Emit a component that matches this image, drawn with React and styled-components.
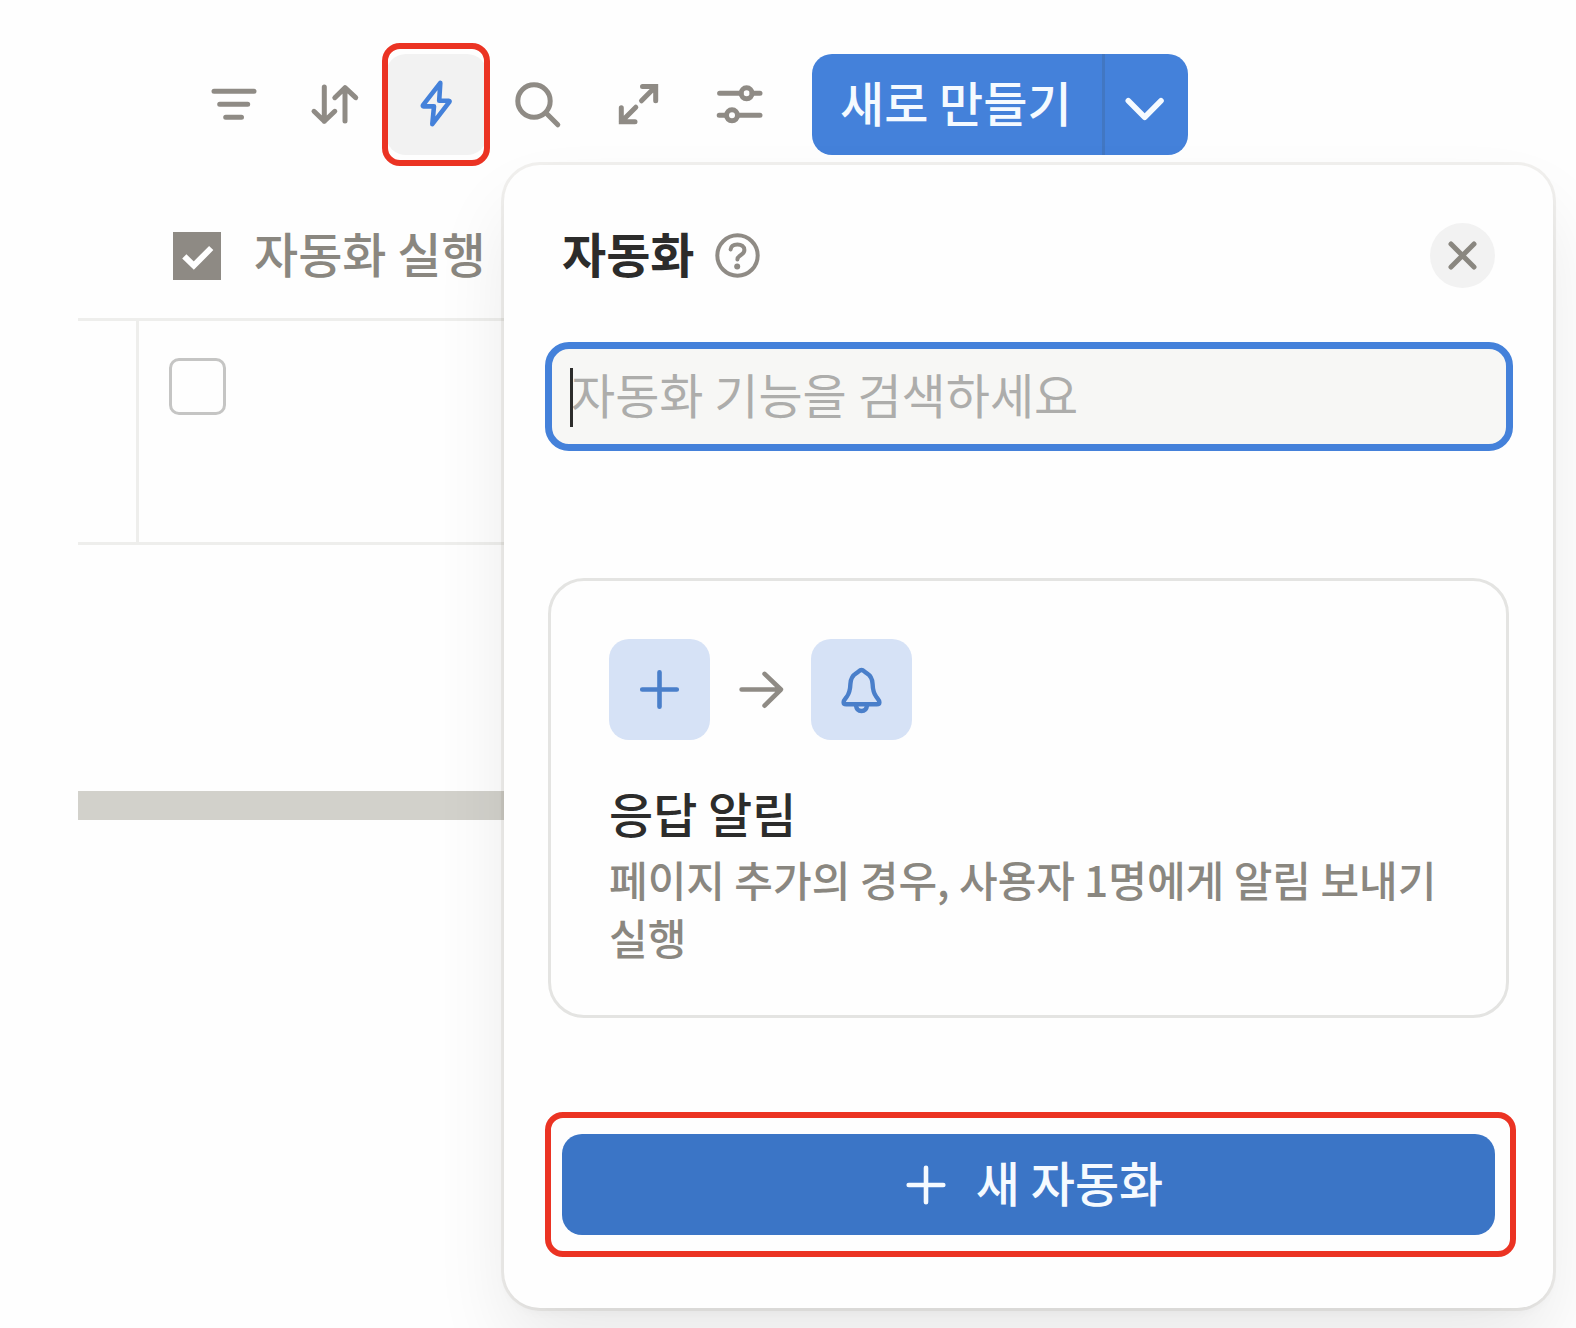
import React, { useState } from "react";
import styled, { createGlobalStyle, css } from "styled-components";

const colors = {
    page: "#fefefe",
    text: "#2c2c2b",
    muted: "#8a8780",
    icon: "#8f8b85",
    line: "#eeeeec",
    cardLine: "#e4e4e2",
    hover: "#f2f2f2",
    blue: "#4481da",
    blueDark: "#3b75c6",
    tile: "#d6e2f6",
    tileIcon: "#4a7fca",
    mark: "#eb3323",
};

const App = () => {
    return (
        <>
            <GlobalStyle/>
            <Page>
                <Toolbar/>
                <Database/>
                <AutomationMenu/>
            </Page>
        </>
    )
}

export default App;

const Toolbar = () => (
    <StyledToolbar>
        <IconButton type="button" aria-label="필터"><FilterIcon/></IconButton>
        <IconButton type="button" aria-label="정렬"><SortIcon/></IconButton>
        <Marked $inset="-11px -3px -11px -4px">
            <IconButton type="button" aria-label="자동화" $active><BoltIcon/></IconButton>
        </Marked>
        <IconButton type="button" aria-label="검색"><SearchIcon/></IconButton>
        <IconButton type="button" aria-label="전체 화면"><ExpandIcon/></IconButton>
        <IconButton type="button" aria-label="설정"><SlidersIcon/></IconButton>
        <SplitButton>
            <CreateButton type="button">새로 만들기</CreateButton>
            <MoreButton type="button" aria-label="템플릿"><ChevronIcon/></MoreButton>
        </SplitButton>
    </StyledToolbar>
)

const Database = () => {
    const [checked, setChecked] = useState(false);

    return (
        <StyledDatabase>
            <Table>
                <thead>
                    <tr>
                        <NarrowHead/>
                        <HeadCell scope="col">
                            <ColumnName>
                                <CheckIcon/>
                                <ColumnLabel>자동화 실행</ColumnLabel>
                            </ColumnName>
                        </HeadCell>
                    </tr>
                </thead>
                <tbody>
                    <tr>
                        <BodyCell/>
                        <BodyCell $divided>
                            <Checkbox
                                type="checkbox"
                                aria-label="자동화 실행"
                                checked={checked}
                                onChange={(e) => setChecked(e.target.checked)}
                            />
                        </BodyCell>
                    </tr>
                </tbody>
            </Table>
            <ScrollThumb/>
        </StyledDatabase>
    )
}

const AutomationMenu = () => {
    const [query, setQuery] = useState("");

    return (
        <Menu role="dialog" aria-labelledby="menu-title">
            <MenuHeader>
                <MenuTitle id="menu-title">자동화</MenuTitle>
                <HelpLink href="#help" aria-label="도움말"><HelpIcon/></HelpLink>
                <CloseButton type="button" aria-label="닫기"><CloseIcon/></CloseButton>
            </MenuHeader>
            <SearchBox>
                <SearchInput
                    type="text"
                    aria-label="자동화 검색"
                    placeholder="자동화 기능을 검색하세요"
                    value={query}
                    onChange={(e) => setQuery(e.target.value)}
                />
                {!query && <Caret/>}
            </SearchBox>
            <Card>
                <Flow>
                    <Tile><PlusIcon size={101}/></Tile>
                    <ArrowIcon/>
                    <Tile><BellIcon/></Tile>
                </Flow>
                <CardTitle>응답 알림</CardTitle>
                <CardText>페이지 추가의 경우, 사용자 1명에게 알림 보내기 실행</CardText>
            </Card>
            <MenuFooter>
                <Marked $inset="-22px -21px -22px -17px">
                    <PrimaryButton type="button">
                        <PlusIcon size={64}/>
                        <ButtonLabel>새 자동화</ButtonLabel>
                    </PrimaryButton>
                </Marked>
            </MenuFooter>
        </Menu>
    )
}

/* icons */

const FilterIcon = () => (
    <Icon width="101" height="101" viewBox="0 0 101 101">
        <path d="M30 37.3H70M35.7 50.3H63.7M41.7 63.3H57.5"/>
    </Icon>
)

const SortIcon = () => (
    <Icon width="101" height="101" viewBox="0 0 101 101">
        <path d="M39.3 33V67.3M29 57.3L39.3 67.3L49.8 57.3"/>
        <path d="M60 67V33.7M49.8 43.7L60 33.7L70.7 43.7"/>
    </Icon>
)

const BoltIcon = () => (
    <Icon width="101" height="101" viewBox="0 0 101 101" $weight={4.6}>
        <path d="M54.3 28.8L37 51.2C36.6 51.9 36.8 52.4 37.6 52.4H48L46.3 70.2L63.4 47.8C63.8 47.1 63.6 46.7 62.8 46.7H53.2Z"/>
    </Icon>
)

const SearchIcon = () => (
    <Icon width="101" height="101" viewBox="0 0 101 101">
        <circle cx="47" cy="47" r="16.2"/>
        <path d="M59.3 59.3L70.8 70.8"/>
    </Icon>
)

const ExpandIcon = () => (
    <Icon width="101" height="101" viewBox="0 0 101 101" $join="miter">
        <path d="M54.5 32.6H67.7V46.8M67.7 32.6L53.5 46.8"/>
        <path d="M33.3 53.8V67.7H47M33.3 67.7L47.8 53.2"/>
    </Icon>
)

const SlidersIcon = () => (
    <Icon width="101" height="101" viewBox="0 0 101 101">
        <circle cx="57.6" cy="39.3" r="5.5"/>
        <path d="M30.6 39.3H52.1M63.1 39.3H71"/>
        <circle cx="43" cy="61.3" r="5.5"/>
        <path d="M30.2 61.3H37.5M48.5 61.3H71"/>
    </Icon>
)

const ChevronIcon = () => (
    <Icon width="83" height="101" viewBox="1 0 83 101" $weight={5.6}>
        <path d="M24.3 46.8L40.7 63.2L57 46.8"/>
    </Icon>
)

const CheckIcon = () => (
    <svg width="48" height="48" viewBox="0 0 48 48" fill="none">
        <rect width="48" height="48" fill="#8e8a84"/>
        <path d="M11.3 24.3L20.8 33.6L38.2 16" stroke="#fff" strokeWidth="6"/>
    </svg>
)

const HelpIcon = () => (
    <Icon width="45" height="45" viewBox="0 0 45 45" $weight={4}>
        <circle cx="22.5" cy="22.5" r="20.2"/>
        <path d="M15.6 16.4C16 13 18.8 11.4 22.4 11.4C26.4 11.4 29.4 13.5 29.4 16.9C29.4 19.6 27.8 20.8 25.6 22.2C23.4 23.6 22.4 24.5 22.4 26.4"/>
        <circle cx="22.2" cy="33.6" r="3" fill="currentColor" stroke="none"/>
    </Icon>
)

const CloseIcon = () => (
    <Icon width="65" height="65" viewBox="0 0 65 65">
        <path d="M21 21L44 44M44 21L21 44"/>
    </Icon>
)

const PlusIcon = ({ size }) => (
    <Icon width={size} height={size} viewBox={`${-size / 2} ${-size / 2} ${size} ${size}`} $weight={4.6}>
        <path d="M-17.3 0H17.3M0 -17.3V17.3"/>
    </Icon>
)

const ArrowIcon = () => (
    <Icon width="101" height="101" viewBox="0 0 101 101" $weight={4.6}>
        <path d="M31.6 50.5H70.6M54.6 34.9L70.9 50.5L54.6 66.7"/>
    </Icon>
)

const BellIcon = () => (
    <Icon width="101" height="101" viewBox="0 0 101 101" $weight={4.4}>
        <path d="M50.5 31C48.4 31 47.6 32.9 45.4 34.2C41.4 36.6 39.6 40 39.4 45C39.2 51 38.3 54.5 35.6 58C33.7 60.4 32.6 61.6 32.6 63.2C32.6 64.6 33.6 65.3 35.2 65.3H65.8C67.4 65.3 68.4 64.6 68.4 63.2C68.4 61.6 67.3 60.4 65.4 58C62.7 54.5 61.8 51 61.6 45C61.4 40 59.6 36.6 55.6 34.2C53.4 32.9 52.6 31 50.5 31Z"/>
        <path d="M45 66.5C45.4 70 47.6 72 50.5 72C53.4 72 55.6 70 56 66.5"/>
    </Icon>
)

/* styles */

const GlobalStyle = createGlobalStyle`
    * {
        box-sizing: border-box;
    }

    body {
        margin: 0;
        background-color: ${colors.page};
        color: ${colors.text};
        font-family: "Noto Sans CJK KR", sans-serif;
        font-size: 48px;
        line-height: 70px;
    }

    button, input {
        margin: 0;
        padding: 0;
        border: 0;
        background: none;
        color: inherit;
        font: inherit;
    }

    button {
        cursor: pointer;
    }
`

const Icon = styled.svg`
    display: block;
    flex-shrink: 0;
    fill: none;
    stroke: currentColor;
    stroke-width: ${p => p.$weight || 5};
    stroke-linecap: round;
    stroke-linejoin: ${p => p.$join || "round"};
`

const Page = styled.main`
    position: relative;
    min-height: 100vh;
    padding-top: 54px;
`

const StyledToolbar = styled.div`
    display: flex;
    align-items: center;
    padding-left: 184px;
`

const IconButton = styled.button`
    border-radius: 20px;
    color: ${colors.icon};

    ${p => p.$active && css`
        background-color: ${colors.hover};
        color: ${colors.blue};
    `}
`

// red frame around the control it wraps
const Marked = styled.div`
    position: relative;
    display: flex;

    &::after {
        content: "";
        position: absolute;
        inset: ${p => p.$inset};
        border: 6px solid ${colors.mark};
        border-radius: 18px;
        pointer-events: none;
    }
`

const SplitButton = styled.div`
    display: flex;
    margin-left: 22px;
    border-radius: 20px;
    overflow: hidden;
    background-color: ${colors.blue};
    color: #f5faff;
`

const CreateButton = styled.button`
    padding: 0 30px 8px 28px;
    font-weight: 500;
`

const MoreButton = styled.button`
    border-left: 3px solid #4277c2;
`

const StyledDatabase = styled.section`
    margin: 36px 78px 0;
`

const Table = styled.table`
    width: 100%;
    border-collapse: separate;
    border-spacing: 0;
`

const NarrowHead = styled.td`
    width: 58px;
    padding: 0;
    border-bottom: 3px solid ${colors.line};
`

const HeadCell = styled.th`
    padding: 30px 0 27px 37px;
    border-bottom: 3px solid ${colors.line};
    color: ${colors.muted};
    font-weight: 500;
    text-align: left;
`

const ColumnName = styled.div`
    display: flex;
    align-items: center;
    gap: 33px;
    height: 70px;
`

const ColumnLabel = styled.span`
    padding-bottom: 8px;
`

const BodyCell = styled.td`
    height: 224px;
    padding: 0;
    border-bottom: 3px solid ${colors.line};
    line-height: 0;
    vertical-align: top;

    ${p => p.$divided && css`
        padding: 37px 30px;
        border-left: 3px solid ${colors.line};
    `}
`

const Checkbox = styled.input`
    appearance: none;
    width: 57px;
    height: 57px;
    border: 3px solid #c5c5c4;
    border-radius: 10px;

    &:checked {
        background-color: ${colors.blue};
    }
`

const ScrollThumb = styled.div`
    height: 29px;
    margin-top: 246px;
    background-color: #d2d1cb;
`

const Menu = styled.section`
    position: absolute;
    top: 165px;
    left: 504px;
    right: 23px;
    padding: 58px 0 73px;
    border-radius: 36px;
    background-color: ${colors.page};
    box-shadow:
        0 40px 80px -6px rgba(0, 0, 0, 0.09),
        0 6px 12px -3px rgba(0, 0, 0, 0.04),
        0 0 0 3px rgba(84, 72, 49, 0.08);
`

const MenuHeader = styled.header`
    display: flex;
    align-items: center;
    height: 65px;
    padding: 0 58px;
`

const MenuTitle = styled.h2`
    margin: 0;
    padding-bottom: 8px;
    font-size: 48px;
    font-weight: 700;
`

const HelpLink = styled.a`
    margin-left: 21px;
    color: ${colors.icon};
`

const CloseButton = styled.button`
    margin-left: auto;
    border-radius: 50%;
    background-color: ${colors.hover};
    color: ${colors.muted};
`

const SearchBox = styled.div`
    position: relative;
    margin: 54px 40px 0 41px;
`

const SearchInput = styled.input`
    display: block;
    width: 100%;
    height: 109px;
    padding: 0 19px 8px;
    border: 7px solid ${colors.blue};
    border-radius: 24px;
    background-color: #f7f7f5;
    outline: none;

    &::placeholder {
        color: #adadab;
        opacity: 1;
    }
`

const Caret = styled.span`
    position: absolute;
    top: 26px;
    left: 25px;
    width: 3px;
    height: 59px;
    background-color: ${colors.text};
`

const Card = styled.article`
    margin: 127px 44px 0;
    padding: 58px 58px 49px;
    border: 3px solid ${colors.cardLine};
    border-radius: 36px;
`

const Flow = styled.div`
    display: flex;
    color: ${colors.icon};
`

const Tile = styled.div`
    border-radius: 20px;
    background-color: ${colors.tile};
    color: ${colors.tileIcon};
`

const CardTitle = styled.h3`
    margin: 37px 0 3px;
    font-size: 48px;
    font-weight: 500;
`

const CardText = styled.p`
    margin: 0;
    color: ${colors.muted};
    font-size: 42px;
    font-weight: 500;
    line-height: 58px;
    word-break: keep-all;
`

const MenuFooter = styled.footer`
    margin-top: 116px;
    padding: 0 58px;
`

const PrimaryButton = styled.button`
    display: flex;
    align-items: center;
    justify-content: center;
    gap: 18px;
    width: 100%;
    height: 101px;
    border-radius: 20px;
    background-color: ${colors.blueDark};
    color: #f5faff;
    font-weight: 500;
`

const ButtonLabel = styled.span`
    padding-bottom: 8px;
`
